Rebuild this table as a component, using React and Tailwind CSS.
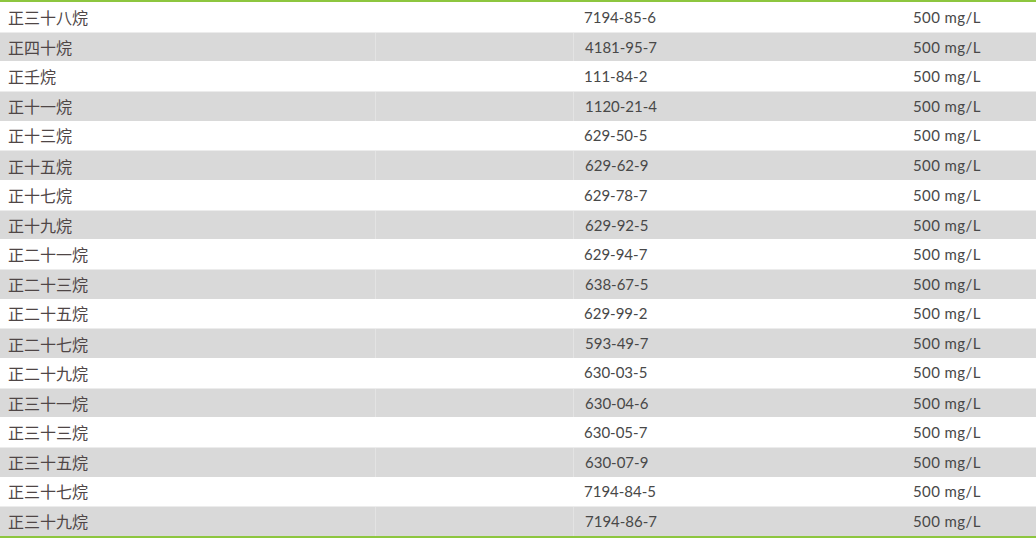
import React from "react";

const rows = [
  ["正三十八烷", "7194-85-6"],
  ["正四十烷", "4181-95-7"],
  ["正壬烷", "111-84-2"],
  ["正十一烷", "1120-21-4"],
  ["正十三烷", "629-50-5"],
  ["正十五烷", "629-62-9"],
  ["正十七烷", "629-78-7"],
  ["正十九烷", "629-92-5"],
  ["正二十一烷", "629-94-7"],
  ["正二十三烷", "638-67-5"],
  ["正二十五烷", "629-99-2"],
  ["正二十七烷", "593-49-7"],
  ["正二十九烷", "630-03-5"],
  ["正三十一烷", "630-04-6"],
  ["正三十三烷", "630-05-7"],
  ["正三十五烷", "630-07-9"],
  ["正三十七烷", "7194-84-5"],
  ["正三十九烷", "7194-86-7"],
];

export default function App() {
  return (
    <div className="w-[1036px] h-[541px] bg-white">
      {/* Table */}
      <div className="border-t-2 border-b-2 border-[#8dc63f]">
        {rows.map(([name, cas], i) => {
          const odd = i % 2 === 1;
          return (
            <div
              key={cas}
              className={
                "grid grid-cols-[375px_198px_329px_1fr] h-[29.67px] items-stretch " +
                (odd ? "bg-[#d9d9d9] border-t border-[#ececec]" : "bg-white")
              }
            >
              <div className="flex items-center pl-2 text-[16px] text-[#4f4646] font-['Noto_Sans_CJK_SC',serif]">
                {name}
              </div>
              <div className={odd ? "border-l border-[#e3e3e3]" : ""} />
              <div
                className={
                  "flex items-center pl-[11px] text-[15px] text-[#484848] font-['Lato','Noto_Sans',sans-serif] " +
                  (odd ? "border-l border-[#e3e3e3]" : "")
                }
              >
                {cas}
              </div>
              <div className="flex items-center pl-[11px] text-[15px] tracking-[0.4px] text-[#484848] font-['Lato','Noto_Sans',sans-serif]">
                500 mg/L
              </div>
            </div>
          );
        })}
      </div>
    </div>
  );
}
